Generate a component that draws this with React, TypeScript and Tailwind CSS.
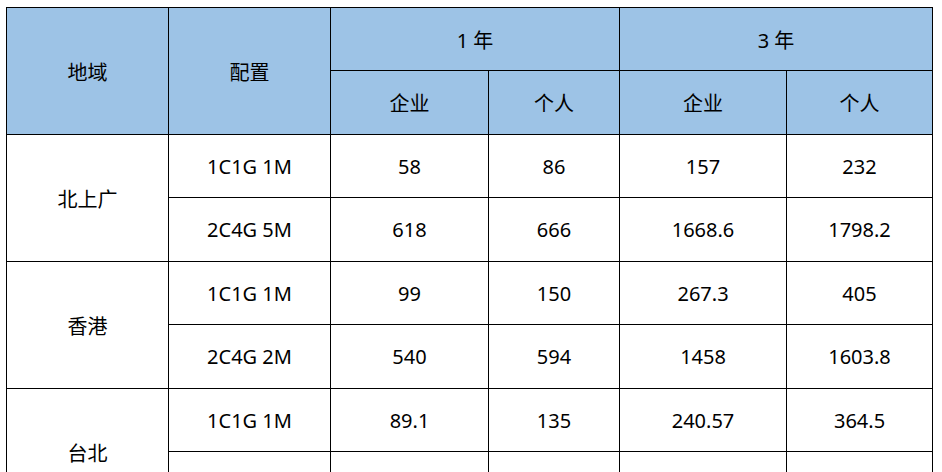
import React from 'react';

type Row = { region?: string; span?: number; config: string; values: string[] };

const rows: Row[] = [
  { region: '北上广', span: 2, config: '1C1G 1M', values: ['58', '86', '157', '232'] },
  { config: '2C4G 5M', values: ['618', '666', '1668.6', '1798.2'] },
  { region: '香港', span: 2, config: '1C1G 1M', values: ['99', '150', '267.3', '405'] },
  { config: '2C4G 2M', values: ['540', '594', '1458', '1603.8'] },
  { region: '台北', span: 2, config: '1C1G 1M', values: ['89.1', '135', '240.57', '364.5'] },
  { config: '', values: ['', '', '', ''] },
];

const cell = 'border border-black text-center align-middle px-0 pb-0 pt-[1px]';
const head = 'border border-black text-center align-middle px-0 pb-0 pt-[3px] bg-[#9dc3e6] font-normal';

const App: React.FC = () => {
  return (
    <div
      className="w-[942px] h-[472px] overflow-hidden bg-white pl-[6px] pt-[7px] text-[20px] text-black"
      style={{ fontFamily: '"Noto Sans", "Noto Sans CJK SC", sans-serif' }}
    >
      <table className="table-fixed border-collapse w-[926px]">
        <colgroup>
          <col className="w-[162px]" />
          <col className="w-[162px]" />
          <col className="w-[158px]" />
          <col className="w-[131px]" />
          <col className="w-[167px]" />
          <col className="w-[146px]" />
        </colgroup>
        <thead>
          <tr className="h-[63px]">
            <th rowSpan={2} className={head}>地域</th>
            <th rowSpan={2} className={head}>配置</th>
            <th colSpan={2} className={head}>1 年</th>
            <th colSpan={2} className={head}>3 年</th>
          </tr>
          <tr className="h-[64px]">
            <th className={head}>企业</th>
            <th className={head}>个人</th>
            <th className={head}>企业</th>
            <th className={head}>个人</th>
          </tr>
        </thead>
        <tbody>
          {rows.map((r, i) => (
            <tr key={i} className={i % 2 === 0 ? 'h-[63px]' : 'h-[64px]'}>
              {r.region && (
                <td rowSpan={r.span} className={`${cell} pt-[3px]`}>{r.region}</td>
              )}
              <td className={cell}>{r.config}</td>
              {r.values.map((v, j) => (
                <td key={j} className={cell}>{v}</td>
              ))}
            </tr>
          ))}
        </tbody>
      </table>
    </div>
  );
};

export default App;
